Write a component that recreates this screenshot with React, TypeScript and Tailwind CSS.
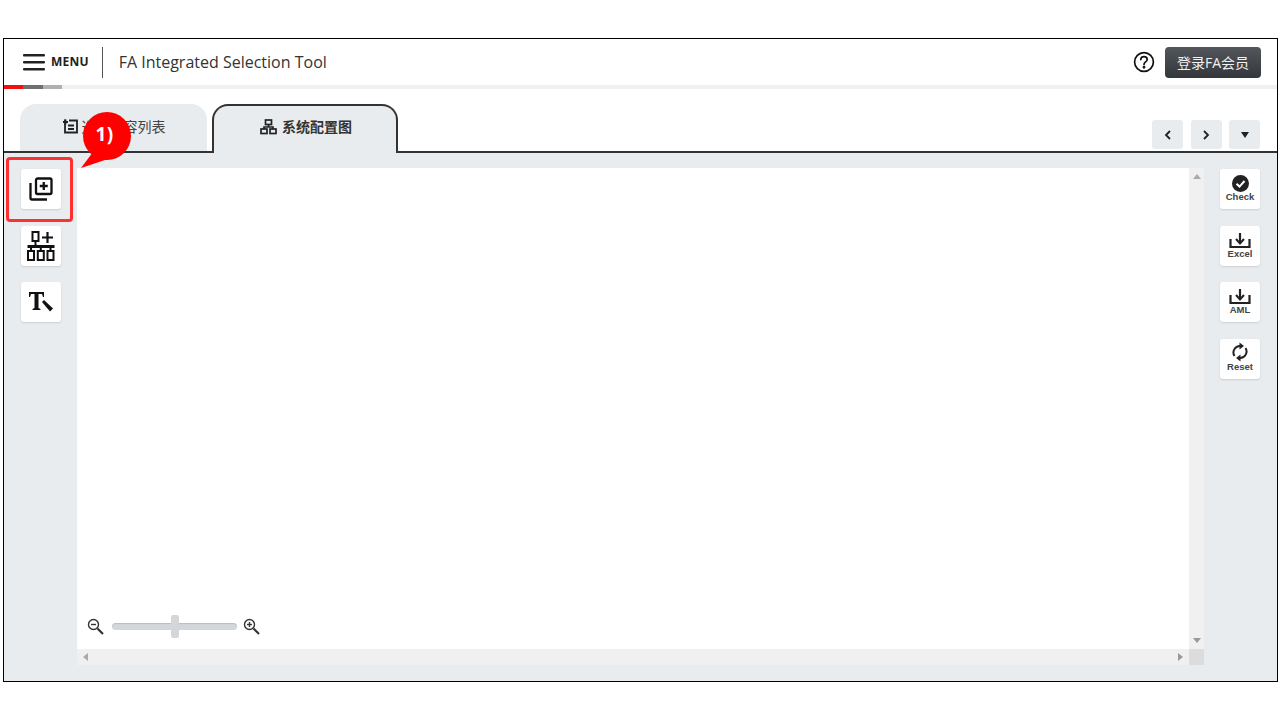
import type { ReactNode } from 'react';

const font = { cjk: 'font-["Open_Sans","Noto_Sans_CJK_SC",sans-serif]' };

function ToolButton({ children, label }: { children: ReactNode; label?: string }) {
  return (
    <button
      type="button"
      className="w-10 h-10 bg-white rounded-[3px] shadow-[0_1px_2px_rgba(0,0,0,0.12)] flex flex-col items-center justify-center"
    >
      {children}
      {label && (
        <span className='text-[9.5px] leading-[10px] font-bold text-[#444] font-["Liberation_Sans",sans-serif]'>
          {label}
        </span>
      )}
    </button>
  );
}

function NavButton({ children }: { children: ReactNode }) {
  return (
    <button
      type="button"
      className="w-[31px] h-[29px] bg-[#e9ecef] rounded-[3px] flex items-center justify-center"
    >
      {children}
    </button>
  );
}

function DownloadIcon() {
  return (
    <svg width="22" height="16" viewBox="0 0 22 16" fill="none" stroke="#222" strokeWidth="2.200">
      <path d="M1.500 6v8h19V6" />
      <path d="M11 0v9" />
      <path d="M7 6l4 4.500L15 6" strokeWidth="2" />
    </svg>
  );
}

function Magnifier({ plus }: { plus?: boolean }) {
  return (
    <svg width="17" height="17" viewBox="0 0 17 17" fill="none" stroke="#333" strokeWidth="1.400">
      <circle cx="6.500" cy="6.500" r="5" />
      <path d="M4 6.500h5" />
      {plus && <path d="M6.500 4v5" />}
      <path d="M10.500 10.500l5.500 5.500" strokeWidth="2.200" />
    </svg>
  );
}

export default function App() {
  return (
    <div className="w-[1280px] h-[720px] bg-white pt-[38px] pl-[3px]">
      <div className={`relative w-[1275px] h-[644px] border border-black flex flex-col bg-white ${font.cjk}`}>
        {/* Header */}
        <header className="h-[46px] shrink-0 flex items-center pl-[19px] pr-[16px]">
          <svg width="22" height="17" viewBox="0 0 22 17" fill="#222">
            <rect width="22" height="2.500" rx="1" y="0" />
            <rect width="22" height="2.500" rx="1" y="7" />
            <rect width="22" height="2.500" rx="1" y="14" />
          </svg>
          <span className="ml-[6px] text-[12px] font-bold tracking-[0.2px] text-[#222]">MENU</span>
          <div className="w-px h-[31px] bg-[#555] ml-[13px]" />
          <span className="ml-[16px] text-[16px] text-[#333]">FA Integrated Selection Tool</span>
          <svg className="ml-auto" width="22" height="22" viewBox="0 0 22 22" fill="none" stroke="#111" strokeWidth="1.700">
            <circle cx="11" cy="11" r="9.400" />
            <path d="M7.800 8.600c0-1.900 1.400-3 3.200-3s3.200 1.100 3.200 2.800c0 2.500-3.200 2.500-3.200 5" strokeLinecap="round" />
            <circle cx="11" cy="16.200" r="0.600" fill="#111" />
          </svg>
          <button
            type="button"
            className="ml-[10px] w-[96px] h-[31px] rounded-[4px] bg-gradient-to-b from-[#53575c] to-[#33373c] text-[#f2f2f2] text-[14px] flex items-center justify-center"
          >
            登录FA会员
          </button>
        </header>

        {/* Progress strip */}
        <div className="h-1 shrink-0 flex bg-[#f0f0f0]">
          <div className="w-[19px] bg-[#f01010]" />
          <div className="w-[20px] bg-[#6f6f6f]" />
          <div className="w-[19px] bg-[#b0b0b0]" />
        </div>

        {/* Tabs */}
        <div className="h-[64px] shrink-0 flex items-end pl-[16px] pr-[17px] border-b-2 border-[#333]">
          <div className="w-[187px] h-[47px] rounded-t-[16px] bg-[#e9ecef] pb-[3px] flex items-center justify-center gap-[4px] text-[14px] text-[#444]">
            <svg width="16" height="16" viewBox="0 0 16 16" fill="none" stroke="#222" strokeWidth="1.800">
              <path d="M3 1.500v13h12V2.500H7" />
              <path d="M1 4h5M3.500 1.500v5" />
              <path d="M6 7.500h6M6 11h6" />
            </svg>
            <span>选型内容列表</span>
          </div>
          <div className="relative top-[2px] ml-[5px] w-[186px] h-[49px] rounded-t-[16px] bg-[#e9ecef] border-2 border-b-0 border-[#333] pb-[6px] pl-[2px] flex items-center justify-center gap-[5px] text-[14px] font-bold text-[#333]">
            <svg width="17" height="16" viewBox="0 0 17 16" fill="none" stroke="#222" strokeWidth="1.700">
              <rect x="5.500" y="1" width="6" height="4.500" />
              <rect x="1" y="10" width="6" height="4.500" />
              <rect x="10" y="10" width="6" height="4.500" />
              <path d="M8.500 5.500V8M4 10V8h9v2" />
            </svg>
            <span>系统配置图</span>
          </div>
          <div className="ml-auto mb-[2px] flex gap-[7.500px]">
            <NavButton>
              <svg width="8" height="10" viewBox="0 0 8 10" fill="none" stroke="#222" strokeWidth="1.800"><path d="M6 1L2 5l4 4" /></svg>
            </NavButton>
            <NavButton>
              <svg width="8" height="10" viewBox="0 0 8 10" fill="none" stroke="#222" strokeWidth="1.800"><path d="M2 1l4 4-4 4" /></svg>
            </NavButton>
            <NavButton>
              <svg width="8" height="6" viewBox="0 0 8 6" fill="#222"><path d="M0 0h8L4 6z" /></svg>
            </NavButton>
          </div>
        </div>

        {/* Body */}
        <div className="flex-1 min-h-0 flex bg-[#e9ecef]">
          <aside className="w-[73px] shrink-0 pt-[16px] pl-[17px] flex flex-col gap-[16.500px]">
            <ToolButton>
              <svg width="24" height="24" viewBox="0 0 24 24" fill="none" stroke="#111" strokeWidth="2.300">
                <rect x="7" y="1.500" width="15.500" height="15.500" rx="1.500" />
                <path d="M1.500 6v15a1.500 1.500 0 0 0 1.500 1.500h15" />
                <path d="M14.750 5v8M10.750 9h8" />
              </svg>
            </ToolButton>
            <ToolButton>
              <svg width="30" height="30" viewBox="0 0 30 30" fill="none" stroke="#111" strokeWidth="2">
                <rect x="6.500" y="1" width="6" height="9" />
                <path d="M9.500 10v5" />
                <path d="M16 6.500h11M21.500 1v11" strokeWidth="2.200" />
                <path d="M1.500 15.500h27" strokeWidth="3" />
                <path d="M5 15.500V20M14.800 15.500V20M24.500 15.500V20" />
                <rect x="2" y="20" width="6" height="9" />
                <rect x="11.800" y="20" width="6" height="9" />
                <rect x="21.500" y="20" width="6" height="9" />
              </svg>
            </ToolButton>
            <ToolButton>
              <svg width="26" height="24" viewBox="0 0 26 24" fill="#111">
                <path d="M1 2h15v5h-1l-1-3h-3.500v14l2 1v1H4.500v-1l2-1V4H3L2 7H1z" />
                <path d="M14 12l2-2 9 8.500-3 3z" />
              </svg>
            </ToolButton>
          </aside>

          {/* Canvas with scrollbars */}
          <div className="w-[1127px] shrink-0 mt-[15px] h-[497px] grid grid-cols-[1fr_15px] grid-rows-[1fr_16px]">
            <div className="relative bg-white">
              <div className="absolute left-[10px] bottom-[14px] flex items-center">
                <Magnifier />
                <div className="relative ml-[8px] mr-[6px] w-[125px] h-[7px] rounded-full bg-[#d3d7dc] shadow-[inset_0_1px_1px_rgba(0,0,0,0.12)]">
                  <div className="absolute left-[59px] top-[-8px] w-[8px] h-[23px] rounded-[2px] bg-[#d3d7dc]" />
                </div>
                <Magnifier plus />
              </div>
            </div>
            <div className="bg-[#f0f0f0] flex flex-col items-center justify-between py-[6px]">
              <svg width="8" height="5" viewBox="0 0 8 5" fill="#aaa"><path d="M4 0l4 5H0z" /></svg>
              <svg width="8" height="5" viewBox="0 0 8 5" fill="#999"><path d="M0 0h8L4 5z" /></svg>
            </div>
            <div className="bg-[#f0f0f0] flex items-center justify-between px-[6px]">
              <svg width="5" height="8" viewBox="0 0 5 8" fill="#aaa"><path d="M5 0v8L0 4z" /></svg>
              <svg width="5" height="8" viewBox="0 0 5 8" fill="#999"><path d="M0 0l5 4-5 4z" /></svg>
            </div>
            <div className="bg-[#dcdcdc]" />
          </div>

          <aside className="flex-1 pt-[16px] pl-[16px] flex flex-col gap-[16.500px]">
            <ToolButton label="Check">
              <svg className="-mt-[2px]" width="17" height="17" viewBox="0 0 17 17">
                <circle cx="8.500" cy="8.500" r="8.500" fill="#222" />
                <path d="M4.500 8.800l3 2.800 5-5.600" fill="none" stroke="#fff" strokeWidth="2" />
              </svg>
            </ToolButton>
            <ToolButton label="Excel">
              <DownloadIcon />
            </ToolButton>
            <ToolButton label="AML">
              <DownloadIcon />
            </ToolButton>
            <ToolButton label="Reset">
              <svg className="-mt-[3px]" width="16" height="20" viewBox="0 0 16 20" fill="none" stroke="#222" strokeWidth="2">
                <path d="M2.500 14A6.500 6.500 0 0 1 8 4" />
                <path d="M13.500 6A6.500 6.500 0 0 1 8 16" />
                <path d="M7.500 0.500l4.500 3.500-4.500 3.500z" fill="#222" stroke="none" />
                <path d="M8.500 12.500L4 16l4.500 3.500z" fill="#222" stroke="none" />
              </svg>
            </ToolButton>
          </aside>
        </div>

        {/* Annotation overlay */}
        <div className="absolute left-[2px] top-[118px] w-[67px] h-[65px] border-[3px] border-[#ff3030] rounded-[4px]" />
        <svg className="absolute left-[75px] top-[73px]" width="55" height="58" viewBox="0 0 55 58" fill="#ff0000">
          <circle cx="28" cy="24" r="24" />
          <path d="M14 40L2 56 32 46z" />
        </svg>
        <span className="absolute left-[91.500px] top-[81px] text-[19px] font-bold text-white tracking-[0.5px]">1)</span>
      </div>
    </div>
  );
}
